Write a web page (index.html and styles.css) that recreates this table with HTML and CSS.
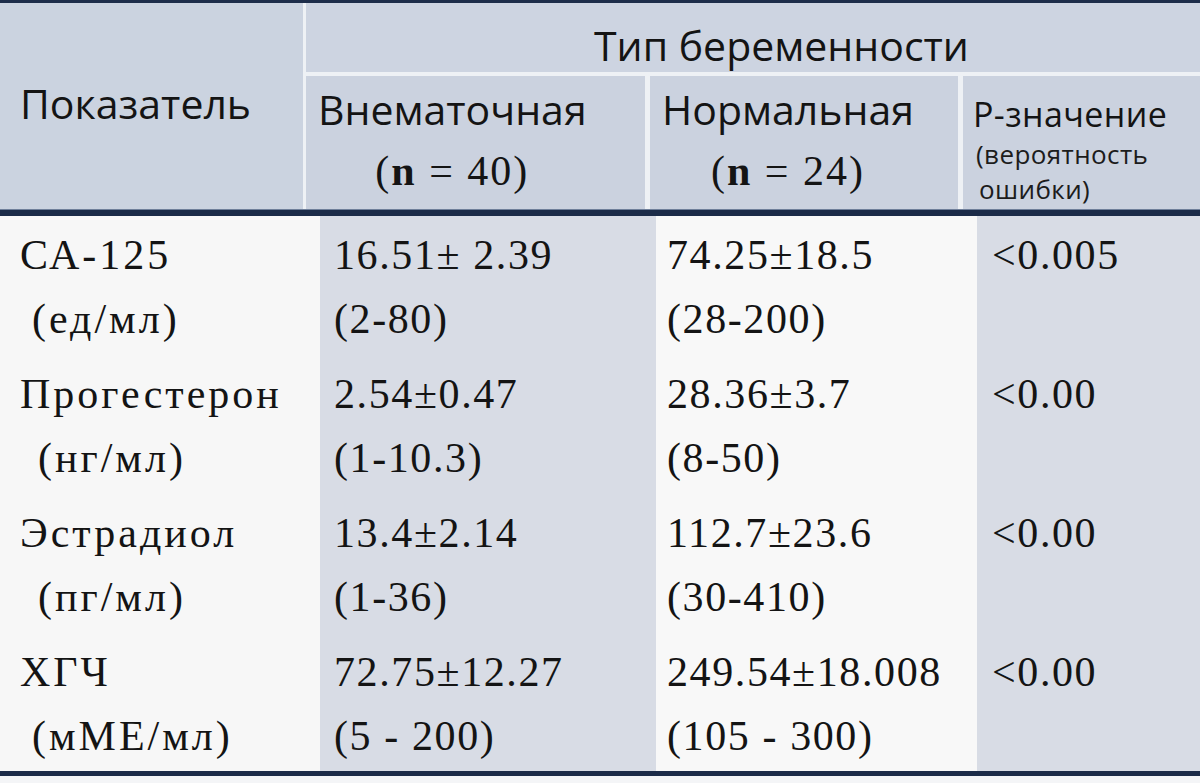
FILE: index.html
```html
<!DOCTYPE html>
<html lang="ru">
<head>
<meta charset="utf-8">
<title>Тип беременности</title>
<link rel="stylesheet" href="styles.css">
</head>
<body>
<div class="table">
  <div class="rule-top"></div>
  <div class="head">
    <div class="h-label">Показатель</div>
    <div class="h-right">
      <div class="h-group">Тип беременности</div>
      <div class="h-cols">
        <div class="h-col h-col-a">
          <div class="h-stack">
            <div class="h-name">Внематочная</div>
            <div class="h-n">(<b>n</b> = 40)</div>
          </div>
        </div>
        <div class="h-col h-col-b">
          <div class="h-stack">
            <div class="h-name">Нормальная</div>
            <div class="h-n">(<b>n</b> = 24)</div>
          </div>
        </div>
        <div class="h-col h-col-p">
          <div class="h-p">Р-значение</div>
          <div class="h-p-sub">(вероятность</div>
          <div class="h-p-sub h-p-sub2">ошибки)</div>
        </div>
      </div>
    </div>
  </div>
  <div class="rule-mid"></div>
  <div class="body">
    <div class="c c1"><div class="l">СА-125</div><div class="l ind">(ед/мл)</div></div>
    <div class="c c2"><div class="l">16.51± 2.39</div><div class="l">(2-80)</div></div>
    <div class="c c3"><div class="l">74.25±18.5</div><div class="l">(28-200)</div></div>
    <div class="c c4"><div class="l">&lt;0.005</div></div>

    <div class="c c1"><div class="l">Прогестерон</div><div class="l ind2">(нг/мл)</div></div>
    <div class="c c2"><div class="l">2.54±0.47</div><div class="l">(1-10.3)</div></div>
    <div class="c c3"><div class="l">28.36±3.7</div><div class="l">(8-50)</div></div>
    <div class="c c4"><div class="l">&lt;0.00</div></div>

    <div class="c c1"><div class="l">Эстрадиол</div><div class="l ind2">(пг/мл)</div></div>
    <div class="c c2"><div class="l">13.4±2.14</div><div class="l">(1-36)</div></div>
    <div class="c c3"><div class="l">112.7±23.6</div><div class="l">(30-410)</div></div>
    <div class="c c4"><div class="l">&lt;0.00</div></div>

    <div class="c c1"><div class="l">ХГЧ</div><div class="l ind">(мМЕ/мл)</div></div>
    <div class="c c2"><div class="l">72.75±12.27</div><div class="l">(5 - 200)</div></div>
    <div class="c c3"><div class="l">249.54±18.008</div><div class="l">(105 - 300)</div></div>
    <div class="c c4"><div class="l">&lt;0.00</div></div>
  </div>
  <div class="rule-bottom"></div>
</div>
</body>
</html>
```
FILE: styles.css
```css
html, body {
  margin: 0;
  padding: 0;
  background: #f4f5f7;
}

.table {
  width: 1200px;
  display: flex;
  flex-direction: column;
  color: #141414;
}

.rule-top {
  height: 3px;
  background: #1d2d4a;
}

.rule-mid {
  height: 6px;
  background: #1b2b48;
  border-top: 1px solid #6f7f9a;
}

.rule-bottom {
  height: 5px;
  background: #1b2b48;
}

/* ---------- header ---------- */
.head {
  display: grid;
  grid-template-columns: 303px 1fr;
  column-gap: 3px;
  background: #eef1f5;
  height: 206px;
  font-family: "Open Sans", "Noto Sans", sans-serif;
}

.h-label {
  background: #cbd3e0;
  display: flex;
  align-items: center;
  padding-left: 20px;
  font-size: 41px;
  padding-bottom: 6px;
}

.h-right {
  display: grid;
  grid-template-rows: 69px 1fr;
  row-gap: 4px;
}

.h-group {
  background: #cdd4e1;
  display: flex;
  align-items: flex-end;
  padding-left: 288px;
  font-size: 41px;
  line-height: 54px;
}

.h-cols {
  display: grid;
  grid-template-columns: 339px 308px 1fr;
  column-gap: 5px;
}

.h-col {
  background: #cbd2df;
  padding-top: 6px;
}

.h-col-a { padding-left: 12px; }
.h-col-b { padding-left: 12px; }
.h-col-p { padding-left: 10px; padding-top: 15px; }

.h-stack {
  display: inline-flex;
  flex-direction: column;
  align-items: center;
}

.h-name {
  font-size: 41px;
  line-height: 54px;
}

.h-n {
  font-family: "Liberation Serif", "Times New Roman", serif;
  font-size: 42px;
  line-height: 46px;
  margin-top: 12px;
  letter-spacing: 2px;
}

.h-n b { font-weight: bold; }

.h-p {
  font-size: 34px;
  line-height: 46px;
  letter-spacing: 0.4px;
}

.h-p-sub {
  font-size: 26px;
  line-height: 35px;
  padding-left: 3px;
  letter-spacing: 0.4px;
  color: #1c1c1c;
}

.h-p-sub2 { padding-left: 6px; }

/* ---------- body ---------- */
.body {
  display: grid;
  grid-template-columns: 320px 336px 321px 223px;
  grid-auto-rows: 139px;
  height: 555px;
  font-family: "Liberation Serif", "Times New Roman", serif;
  font-size: 42px;
  letter-spacing: 1.6px;
}

.c {
  padding-top: 7px;
  box-sizing: border-box;
}

.l {
  line-height: 64px;
  white-space: nowrap;
}

.c1 { background: #f7f7f7; padding-left: 20px; letter-spacing: 3px; }
.c2 { background: #d8dce5; padding-left: 14px; }
.c3 { background: #f8f8f8; padding-left: 11px; }
.c4 { background: #d8dce5; padding-left: 15px; }

.ind { padding-left: 12px; }
.ind2 { padding-left: 18px; }
```
